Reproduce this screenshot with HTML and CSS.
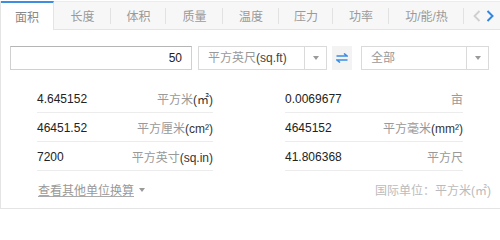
FILE: index.html
```html
<!DOCTYPE html>
<html lang="zh-CN">
<head>
<meta charset="utf-8">
<title>单位换算</title>
<link rel="stylesheet" href="styles.css">
</head>
<body>
<div class="card">
  <div class="tabs">
    <div class="tab active w53">面积</div>
    <div class="tab w57">长度</div>
    <div class="tab w55">体积</div>
    <div class="tab w57">质量</div>
    <div class="tab w56">温度</div>
    <div class="tab w54">压力</div>
    <div class="tab w56">功率</div>
    <div class="tab w75">功/能/热</div>
    <div class="tab-arrows">
      <svg class="arrow" width="8" height="12" viewBox="0 0 8 12"><path d="M6.5 1 L1.5 6 L6.5 11" fill="none" stroke="#cfcfcf" stroke-width="1.8"/></svg>
      <svg class="arrow" width="8" height="12" viewBox="0 0 8 12"><path d="M1.5 1 L6.5 6 L1.5 11" fill="none" stroke="#3385e0" stroke-width="2"/></svg>
    </div>
  </div>

  <div class="converter">
    <div class="input">50</div>
    <div class="select sel1">
      <span class="sel-text"><span class="cn">平方英尺</span>(sq.ft)</span>
      <span class="sel-btn"><span class="caret"></span></span>
    </div>
    <div class="swap">
      <svg width="12" height="10" viewBox="0 0 12 10"><path d="M0.5 3 H11 L8 0.5 M11.5 7 H1 L4 9.5" fill="none" stroke="#3a8ee6" stroke-width="1.6"/></svg>
    </div>
    <div class="select sel2">
      <span class="sel-text"><span class="cn">全部</span></span>
      <span class="sel-btn"><span class="caret"></span></span>
    </div>
  </div>

  <div class="results">
    <div class="cell"><span class="num">4.645152</span><span class="unit"><span class="cn">平方米</span>(㎡)</span></div>
    <div class="cell"><span class="num">0.0069677</span><span class="unit"><span class="cn">亩</span></span></div>
    <div class="cell"><span class="num">46451.52</span><span class="unit"><span class="cn">平方厘米</span>(cm²)</span></div>
    <div class="cell"><span class="num">4645152</span><span class="unit"><span class="cn">平方毫米</span>(mm²)</span></div>
    <div class="cell"><span class="num">7200</span><span class="unit"><span class="cn">平方英寸</span>(sq.in)</span></div>
    <div class="cell"><span class="num">41.806368</span><span class="unit"><span class="cn">平方尺</span></span></div>
  </div>

  <div class="footer">
    <span class="more"><span class="link">查看其他单位换算</span><span class="caret small"></span></span>
    <span class="si">国际单位：平方米(㎡)</span>
  </div>
</div>
</body>
</html>
```

FILE: styles.css
```css
html, body {
  margin: 0;
  padding: 0;
  overflow: hidden;
  background: #fff;
}
body {
  font-family: "Liberation Sans", "Noto Sans CJK SC", sans-serif;
  font-size: 12px;
  color: #333;
}
.card {
  margin-top: 1px;
  width: 510px;
  height: 208px;
  box-sizing: border-box;
  border: 1px solid #e4e4e4;
  border-top: 0;
  box-shadow: 0 1px 2px rgba(0,0,0,0.08);
  background: #fff;
}
.tabs {
  display: flex;
  height: 29px;
  box-sizing: border-box;
  background: #f7f7f7;
  border-top: 1px solid #ececec;
  border-bottom: 1px solid #e4e4e4;
}
.tab {
  display: flex;
  align-items: center;
  justify-content: center;
  color: #9a9a9a;
  font-size: 12px;
  background: linear-gradient(#e2e2e2, #e2e2e2) right center / 1px 16px no-repeat;
  flex: none;
}
.tab.active {
  background: #fff;
  color: #888;
  margin-top: -1px;
  height: 29px;
  box-sizing: border-box;
  border-top: 2px solid #3d8ee0;
  border-right: 1px solid #e4e4e4;
}
.w53 { width: 53px; }
.w54 { width: 54px; }
.w55 { width: 55px; }
.w56 { width: 56px; }
.w57 { width: 57px; }
.w75 { width: 75px; }
.tab-arrows {
  display: flex;
  align-items: center;
  gap: 5px;
  padding-left: 9px;
}
.arrow { display: block; }

.converter {
  display: flex;
  align-items: center;
  height: 24px;
  margin-top: 16px;
  padding-left: 9px;
}
.input {
  width: 182px;
  height: 24px;
  box-sizing: border-box;
  border: 1px solid #d0d0d0;
  border-top-color: #b5b5b5;
  text-align: right;
  padding-right: 9px;
  line-height: 22px;
  font-size: 12px;
  color: #222;
}
.select {
  display: flex;
  height: 24px;
  box-sizing: border-box;
  border: 1px solid #dadada;
  color: #444;
}
.sel1 { width: 129px; margin-left: 6px; }
.sel2 { width: 128px; margin-left: 9px; }
.sel-text {
  flex: 1;
  padding-left: 9px;
  line-height: 22px;
  white-space: nowrap;
}
.cn { color: #999; }
.sel-btn {
  width: 21px;
  border-left: 1px solid #dadada;
  display: flex;
  align-items: center;
  justify-content: center;
}
.caret {
  width: 0;
  height: 0;
  border-left: 3px solid transparent;
  border-right: 3px solid transparent;
  border-top: 4px solid #9a9a9a;
}
.swap {
  width: 20px;
  height: 24px;
  margin-left: 5px;
  background: #f3f3f3;
  display: flex;
  align-items: center;
  justify-content: center;
}

.results {
  display: grid;
  grid-template-columns: 176px 178px;
  column-gap: 72px;
  margin-top: 14px;
  padding-left: 36px;
}
.cell {
  height: 29px;
  box-sizing: border-box;
  border-bottom: 1px solid #ececec;
  display: flex;
  align-items: center;
  justify-content: space-between;
  padding-top: 1px;
}
.num { color: #222; }
.unit { color: #333; white-space: nowrap; }
.unit .cn { color: #999; }

.footer {
  display: flex;
  justify-content: space-between;
  align-items: center;
  height: 37px;
  padding: 0 18px 0 37px;
}
.more {
  display: flex;
  align-items: center;
  gap: 5px;
}
.link {
  color: #999;
  text-decoration: underline;
  text-decoration-color: #aaa;
}
.si { color: #bbb; }
```
